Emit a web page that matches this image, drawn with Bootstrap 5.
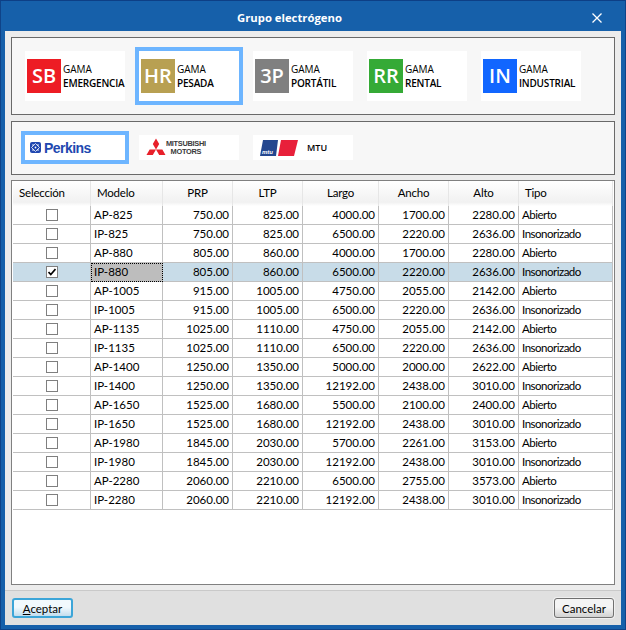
<!DOCTYPE html>
<html lang="es">
<head>
<meta charset="utf-8">
<title>Grupo electrógeno</title>
<link href="https://cdn.jsdelivr.net/npm/bootstrap@5.3.0/dist/css/bootstrap.min.css" rel="stylesheet">
<style>
html, body { margin: 0; background: #1660aa; }
body { font-family: "Open Sans", "Liberation Sans", sans-serif; font-size: 12px; color: #000; line-height: 1; }
.win-frame { width: 626px; height: 630px; background: #1660aa; border: 1px solid #0f4388; border-top-color: #0d3f86; }
.win-title { height: 30px; color: #fff; font-weight: 700; font-size: 11.3px; position: relative; padding: 4px 0 0 236px; }
.win-close { position: absolute; right: 23px; top: 12px; display: block; }
.win-client { width: 616px; height: 594px; margin: 0 4px; background: #ececec; padding: 6px 6px 0; }
.pick-panel { width: 604px; background: #f7f7f7; border: 1px solid #696969; }
.pick-gama { height: 78px; padding: 13px; gap: 14px; }
.pick-brand { height: 54px; margin-top: 6px; padding: 13px; gap: 14px; }
.tile-gama { width: 100px; height: 50px; background: #fff; padding-left: 2px; }
.tile-brand { width: 100px; height: 25px; background: #fff; }
.tile-on { outline: 4px solid #6db5ff; }
.brand-perkins { padding-left: 5px; }
.brand-mits { padding-left: 6px; }
.brand-mtu { padding-left: 7px; }
.gama-sq { width: 34px; height: 34px; color: #fff; font-size: 20px; font-weight: 600; margin-right: 2px; flex: none; }
.sq-sb { background: #ed1c24; }
.sq-hr { background: #b8a052; }
.sq-3p { background: #808080; }
.sq-rr { background: #35aa36; }
.sq-in { background: #1166ff; }
.gama-txt { font-size: 10px; line-height: 14px; white-space: nowrap; }
.gama-txt b { font-weight: 600; display: block; letter-spacing: -.2px; }
.perkins-word { font-family: "Liberation Sans", sans-serif; font-weight: 700; font-size: 14px; color: #2148b0; letter-spacing: -.55px; margin-left: 3px; }
.mits-word { font-family: "Liberation Sans", sans-serif; font-weight: 700; font-size: 7.4px; line-height: 8px; color: #3a3a3a; text-align: center; letter-spacing: -.3px; margin-left: -1px; }
.mtu-word { font-size: 9px; font-weight: 600; margin-left: 9px; }
.data-box { width: 604px; height: 405px; margin-top: 5px; background: #fff; border: 1px solid #808080; padding-left: 1px; overflow: hidden; font-family: Lato, "Open Sans", sans-serif; }
.data-grid.table { width: 600px; table-layout: fixed; border-collapse: separate; border-spacing: 0; margin: 0; font-size: 11.5px; color: #000; --bs-table-bg: transparent; }
.data-grid.table > thead > tr > th { height: 25px; padding: 0 0 1px; font-weight: 400; font-size: 11.5px; letter-spacing: -.2px; text-align: center; vertical-align: middle; border: 0; border-right: 1px solid #e6e6e6; background: linear-gradient(#fff, #f1f1f1 85%, #fff); box-shadow: none; }
.data-grid.table > thead > tr > th.to-left { text-align: left; padding-left: 6px; }
.data-grid.table > tbody > tr > td { height: 19px; padding: 0 3px; vertical-align: middle; text-align: right; border: 0; border-right: 1px solid #c0c0c0; border-bottom: 1px solid #c0c0c0; white-space: nowrap; box-shadow: none; line-height: 18px; }
.data-grid.table > tbody > tr > td.to-left { text-align: left; }
.data-grid.table > tbody > tr > td:last-child { letter-spacing: -.5px; }
.data-grid.table > tbody > tr > td.to-mid { text-align: center; padding: 0 0 0 1px; }
.data-grid.table > tbody > tr.row-on > td { background: #c8dce8; }
.data-grid.table > tbody > tr.row-on > td.cell-on { background: #bdbdbd; outline: 1px dotted #000; outline-offset: -1px; }
.tick-box { display: inline-block; width: 12px; height: 12px; border: 1px solid #7f7f7f; background: #fff; vertical-align: middle; margin-bottom: 2px; position: relative; }
.tick-box svg { position: absolute; left: 1px; top: 1px; display: block; }
.win-foot { width: 616px; height: 35px; margin: 5px 0 0 -6px; background: #e0e0e0; border-top: 1px solid #c9c9c9; padding: 7px 7px 0 7px; }
.foot-btn.btn { width: 61px; height: 20px; padding: 0; font-size: 11.5px; line-height: 17px; color: #000; border-radius: 3px; font-family: Lato, "Open Sans", sans-serif; }
.btn-main.btn { border: 2px solid #3ca5d8; background: linear-gradient(#f2f9fd 0 45%, #c2ddee); }
.btn-plain.btn { border: 1px solid #707070; background: linear-gradient(#f4f4f4 0 45%, #d2d2d2); width: 60px; box-shadow: 0 0 0 1px #f0f0f0; }
</style>
</head>
<body>
<div class="win-frame">
  <div class="win-title d-flex align-items-center">
    <span>Grupo electrógeno</span>
    <svg class="win-close" width="10" height="10" viewBox="0 0 10 10"><path d="M.5.5l9 9M9.5.5l-9 9" stroke="#fff" stroke-width="1.3" fill="none"/></svg>
  </div>
  <div class="win-client">
    <div class="pick-panel pick-gama d-flex">
      <div class="tile-gama d-flex align-items-center"><div class="gama-sq sq-sb d-flex align-items-center justify-content-center">SB</div><div class="gama-txt">GAMA<b>EMERGENCIA</b></div></div>
      <div class="tile-gama tile-on d-flex align-items-center"><div class="gama-sq sq-hr d-flex align-items-center justify-content-center">HR</div><div class="gama-txt">GAMA<b>PESADA</b></div></div>
      <div class="tile-gama d-flex align-items-center"><div class="gama-sq sq-3p d-flex align-items-center justify-content-center">3P</div><div class="gama-txt">GAMA<b>PORTÁTIL</b></div></div>
      <div class="tile-gama d-flex align-items-center"><div class="gama-sq sq-rr d-flex align-items-center justify-content-center">RR</div><div class="gama-txt">GAMA<b>RENTAL</b></div></div>
      <div class="tile-gama d-flex align-items-center"><div class="gama-sq sq-in d-flex align-items-center justify-content-center">IN</div><div class="gama-txt">GAMA<b>INDUSTRIAL</b></div></div>
    </div>
    <div class="pick-panel pick-brand d-flex">
      <div class="tile-brand tile-on brand-perkins d-flex align-items-center">
        <svg width="11" height="11" viewBox="0 0 11 11"><rect width="11" height="11" rx="2" fill="#2148b0"/><path d="M5.5 1.5L9.5 5.5 5.5 9.5 1.5 5.5z" fill="none" stroke="#fff" stroke-width=".8"/><circle cx="3" cy="3" r=".8" fill="#fff"/><circle cx="8" cy="3" r=".8" fill="#fff"/><circle cx="3" cy="8" r=".8" fill="#fff"/><circle cx="8" cy="8" r=".8" fill="#fff"/><circle cx="5.5" cy="5.5" r=".9" fill="#fff"/></svg>
        <span class="perkins-word">Perkins</span>
      </div>
      <div class="tile-brand brand-mits d-flex align-items-center">
        <svg width="22" height="20" viewBox="0 0 22 20"><path fill="#e8202a" d="M11 11.5L14.2 6 11 .5 7.8 6zM11 11.5H4.65L1.47 17H7.8zM11 11.5h6.35L20.5 17h-6.3z"/></svg>
        <div class="mits-word">MITSUBISHI<br>MOTORS</div>
      </div>
      <div class="tile-brand brand-mtu d-flex align-items-center">
        <svg width="38" height="16" viewBox="0 0 38 16"><path fill="#24478f" d="M3 0h15l-2 16H0z"/><path fill="#e8203a" d="M21 0h17l-4 16H18z"/><text x="2" y="13.5" font-family="Liberation Sans" font-size="6" font-style="italic" font-weight="700" fill="#fff">mtu</text></svg>
        <span class="mtu-word">MTU</span>
      </div>
    </div>
    <div class="data-box">
      <table class="table data-grid">
        <colgroup><col style="width:78px"><col style="width:72px"><col style="width:70px"><col style="width:70px"><col style="width:76px"><col style="width:70px"><col style="width:70px"><col style="width:94px"></colgroup>
        <thead><tr><th class="to-left">Selección</th><th class="to-left">Modelo</th><th>PRP</th><th>LTP</th><th>Largo</th><th>Ancho</th><th>Alto</th><th class="to-left">Tipo</th></tr></thead>
        <tbody>
          <tr><td class="to-mid"><span class="tick-box"></span></td><td class="to-left">AP-825</td><td>750.00</td><td>825.00</td><td>4000.00</td><td>1700.00</td><td>2280.00</td><td class="to-left">Abierto</td></tr>
          <tr><td class="to-mid"><span class="tick-box"></span></td><td class="to-left">IP-825</td><td>750.00</td><td>825.00</td><td>6500.00</td><td>2220.00</td><td>2636.00</td><td class="to-left">Insonorizado</td></tr>
          <tr><td class="to-mid"><span class="tick-box"></span></td><td class="to-left">AP-880</td><td>805.00</td><td>860.00</td><td>4000.00</td><td>1700.00</td><td>2280.00</td><td class="to-left">Abierto</td></tr>
          <tr class="row-on"><td class="to-mid"><span class="tick-box"><svg width="8" height="8" viewBox="0 0 8 8"><path d="M.5 4l2.3 2.5L7.5 1" fill="none" stroke="#000" stroke-width="1.7"/></svg></span></td><td class="to-left cell-on">IP-880</td><td>805.00</td><td>860.00</td><td>6500.00</td><td>2220.00</td><td>2636.00</td><td class="to-left">Insonorizado</td></tr>
          <tr><td class="to-mid"><span class="tick-box"></span></td><td class="to-left">AP-1005</td><td>915.00</td><td>1005.00</td><td>4750.00</td><td>2055.00</td><td>2142.00</td><td class="to-left">Abierto</td></tr>
          <tr><td class="to-mid"><span class="tick-box"></span></td><td class="to-left">IP-1005</td><td>915.00</td><td>1005.00</td><td>6500.00</td><td>2220.00</td><td>2636.00</td><td class="to-left">Insonorizado</td></tr>
          <tr><td class="to-mid"><span class="tick-box"></span></td><td class="to-left">AP-1135</td><td>1025.00</td><td>1110.00</td><td>4750.00</td><td>2055.00</td><td>2142.00</td><td class="to-left">Abierto</td></tr>
          <tr><td class="to-mid"><span class="tick-box"></span></td><td class="to-left">IP-1135</td><td>1025.00</td><td>1110.00</td><td>6500.00</td><td>2220.00</td><td>2636.00</td><td class="to-left">Insonorizado</td></tr>
          <tr><td class="to-mid"><span class="tick-box"></span></td><td class="to-left">AP-1400</td><td>1250.00</td><td>1350.00</td><td>5000.00</td><td>2000.00</td><td>2622.00</td><td class="to-left">Abierto</td></tr>
          <tr><td class="to-mid"><span class="tick-box"></span></td><td class="to-left">IP-1400</td><td>1250.00</td><td>1350.00</td><td>12192.00</td><td>2438.00</td><td>3010.00</td><td class="to-left">Insonorizado</td></tr>
          <tr><td class="to-mid"><span class="tick-box"></span></td><td class="to-left">AP-1650</td><td>1525.00</td><td>1680.00</td><td>5500.00</td><td>2100.00</td><td>2400.00</td><td class="to-left">Abierto</td></tr>
          <tr><td class="to-mid"><span class="tick-box"></span></td><td class="to-left">IP-1650</td><td>1525.00</td><td>1680.00</td><td>12192.00</td><td>2438.00</td><td>3010.00</td><td class="to-left">Insonorizado</td></tr>
          <tr><td class="to-mid"><span class="tick-box"></span></td><td class="to-left">AP-1980</td><td>1845.00</td><td>2030.00</td><td>5700.00</td><td>2261.00</td><td>3153.00</td><td class="to-left">Abierto</td></tr>
          <tr><td class="to-mid"><span class="tick-box"></span></td><td class="to-left">IP-1980</td><td>1845.00</td><td>2030.00</td><td>12192.00</td><td>2438.00</td><td>3010.00</td><td class="to-left">Insonorizado</td></tr>
          <tr><td class="to-mid"><span class="tick-box"></span></td><td class="to-left">AP-2280</td><td>2060.00</td><td>2210.00</td><td>6500.00</td><td>2755.00</td><td>3573.00</td><td class="to-left">Abierto</td></tr>
          <tr><td class="to-mid"><span class="tick-box"></span></td><td class="to-left">IP-2280</td><td>2060.00</td><td>2210.00</td><td>12192.00</td><td>2438.00</td><td>3010.00</td><td class="to-left">Insonorizado</td></tr>
        </tbody>
      </table>
    </div>
    <div class="win-foot d-flex justify-content-between align-items-start">
      <button type="button" class="btn foot-btn btn-main"><u>A</u>ceptar</button>
      <button type="button" class="btn foot-btn btn-plain">Cancelar</button>
    </div>
  </div>
</div>
<script src="https://cdn.jsdelivr.net/npm/bootstrap@5.3.0/dist/js/bootstrap.bundle.min.js"></script>
</body>
</html>
